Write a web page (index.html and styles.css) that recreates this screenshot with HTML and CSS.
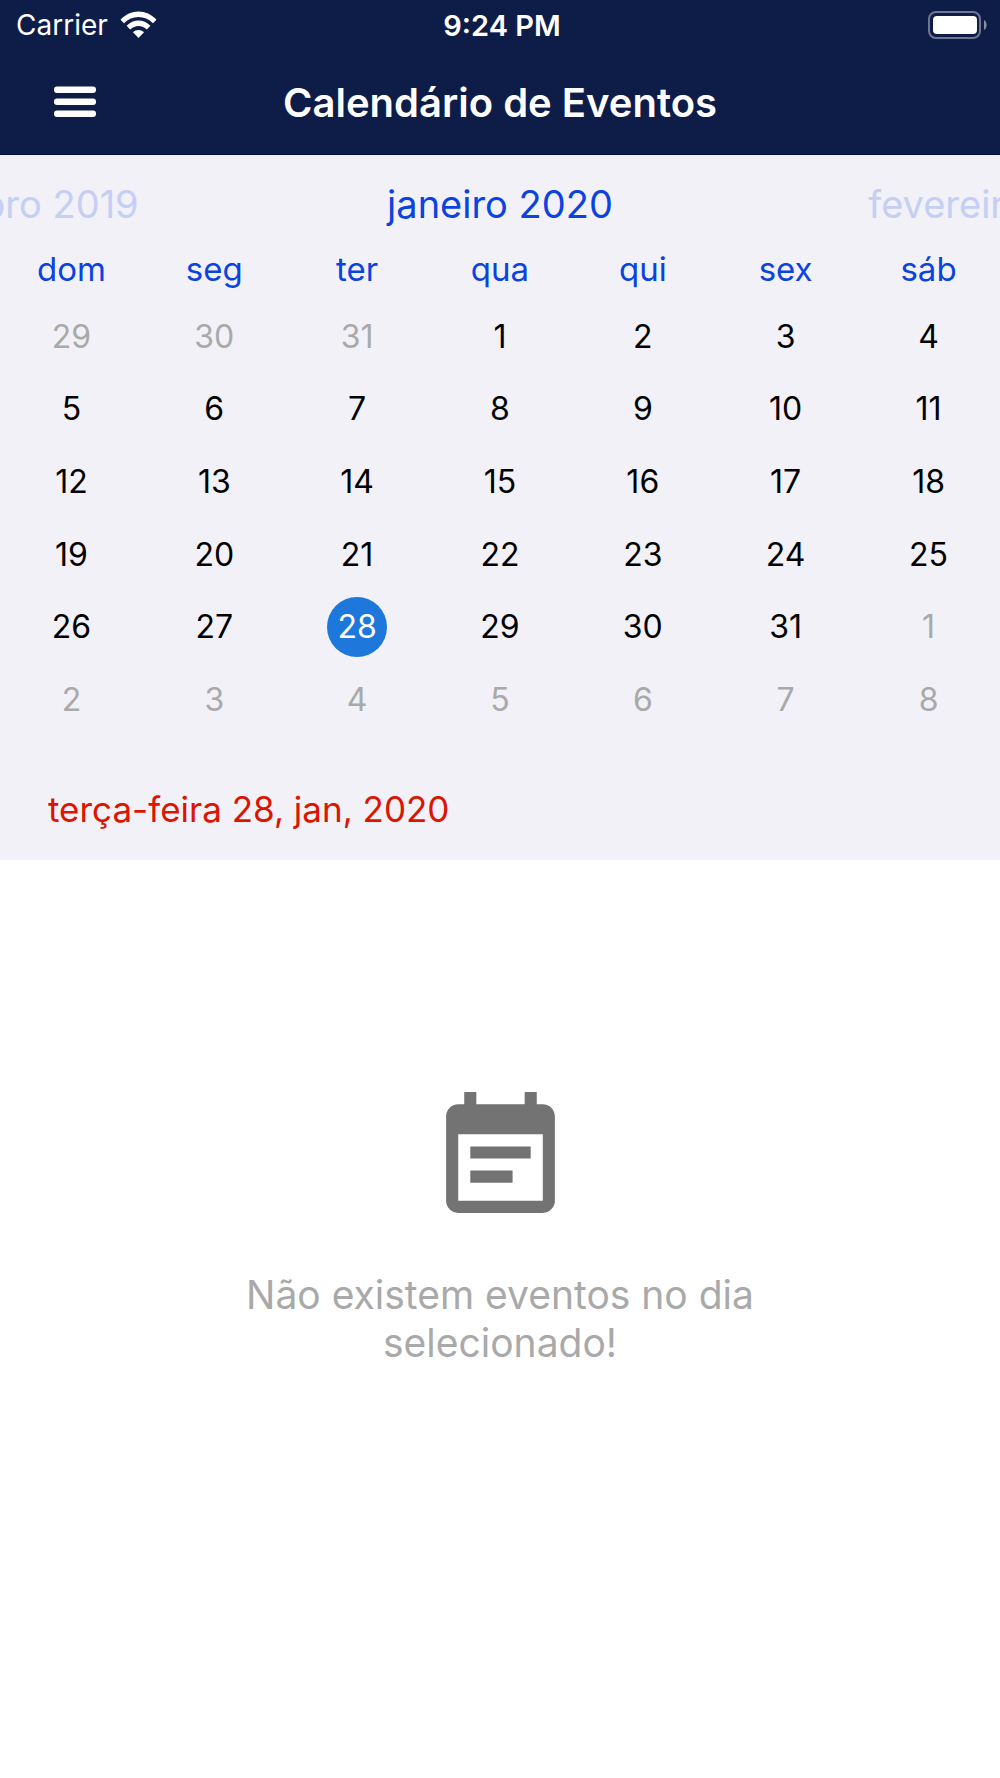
FILE: index.html
```html
<!DOCTYPE html>
<html lang="pt">
<head>
<meta charset="utf-8">
<meta name="viewport" content="width=device-width, initial-scale=1">
<title>Calendário de Eventos</title>
<link rel="stylesheet" href="styles.css">
</head>

<body>
<!--header-->
<header class="header">
<div class="status">
	<div class="carrier">
		Carrier
		<svg class="wifi" viewBox="0 0 37 28" aria-hidden="true">
			<path d="M0.5 8.8C10.5-2.2 26.5-2.2 36.5 8.8L33 12.3C25 3.9 12 3.9 4 12.3Z"/>
			<path d="M6.6 14.8C13.4 7.6 23.6 7.6 30.4 14.8L26.8 18.4C22.2 13.7 14.8 13.7 10.2 18.4Z"/>
			<path d="M13 21.3C16 18.2 21 18.2 24 21.3L18.5 27Z"/>
		</svg>
	</div>
	<div class="time">9:24 PM</div>
	<div class="battery">
		<svg class="battery-icon" viewBox="0 0 60 28" aria-hidden="true">
			<rect class="battery-case" x="1" y="1" width="51" height="26" rx="7"/>
			<rect x="5" y="5" width="44" height="18" rx="4"/>
			<path class="battery-tip" d="M56 9C59.500 10.500 59.500 17.500 56 19Z"/>
		</svg>
	</div>
</div>
<div class="nav">
	<button class="menu" type="button" aria-label="Menu">
		<svg class="menu-icon" viewBox="0 0 42 32" aria-hidden="true">
			<rect y="0.500" width="42" height="6.500" rx="3"/>
			<rect y="12.500" width="42" height="6.500" rx="3"/>
			<rect y="24.500" width="42" height="6.500" rx="3"/>
		</svg>
	</button>
	<h1 class="title">Calendário de Eventos</h1>
</div>
</header>

<!--calendar-->
<section class="calendar">
<div class="months">
	<button class="month" type="button">dezembro 2019</button>
	<button class="month current" type="button">janeiro 2020</button>
	<button class="month" type="button">fevereiro 2020</button>
</div>

<table class="days">
<thead>
<tr><th>dom</th><th>seg</th><th>ter</th><th>qua</th><th>qui</th><th>sex</th><th>sáb</th></tr>
</thead>
<tbody>
<tr>
	<td><button class="day other" type="button">29</button></td>
	<td><button class="day other" type="button">30</button></td>
	<td><button class="day other" type="button">31</button></td>
	<td><button class="day" type="button">1</button></td>
	<td><button class="day" type="button">2</button></td>
	<td><button class="day" type="button">3</button></td>
	<td><button class="day" type="button">4</button></td>
</tr>
<tr>
	<td><button class="day" type="button">5</button></td>
	<td><button class="day" type="button">6</button></td>
	<td><button class="day" type="button">7</button></td>
	<td><button class="day" type="button">8</button></td>
	<td><button class="day" type="button">9</button></td>
	<td><button class="day" type="button">10</button></td>
	<td><button class="day" type="button">11</button></td>
</tr>
<tr>
	<td><button class="day" type="button">12</button></td>
	<td><button class="day" type="button">13</button></td>
	<td><button class="day" type="button">14</button></td>
	<td><button class="day" type="button">15</button></td>
	<td><button class="day" type="button">16</button></td>
	<td><button class="day" type="button">17</button></td>
	<td><button class="day" type="button">18</button></td>
</tr>
<tr>
	<td><button class="day" type="button">19</button></td>
	<td><button class="day" type="button">20</button></td>
	<td><button class="day" type="button">21</button></td>
	<td><button class="day" type="button">22</button></td>
	<td><button class="day" type="button">23</button></td>
	<td><button class="day" type="button">24</button></td>
	<td><button class="day" type="button">25</button></td>
</tr>
<tr>
	<td><button class="day" type="button">26</button></td>
	<td><button class="day" type="button">27</button></td>
	<td><button class="day selected" type="button">28</button></td>
	<td><button class="day" type="button">29</button></td>
	<td><button class="day" type="button">30</button></td>
	<td><button class="day" type="button">31</button></td>
	<td><button class="day other" type="button">1</button></td>
</tr>
<tr>
	<td><button class="day other" type="button">2</button></td>
	<td><button class="day other" type="button">3</button></td>
	<td><button class="day other" type="button">4</button></td>
	<td><button class="day other" type="button">5</button></td>
	<td><button class="day other" type="button">6</button></td>
	<td><button class="day other" type="button">7</button></td>
	<td><button class="day other" type="button">8</button></td>
</tr>
</tbody>
</table>

<h2 class="date">terça-feira 28, jan, 2020</h2>
</section>

<!--no events-->
<main class="empty">
	<svg class="empty-icon" viewBox="0 0 24 24" aria-hidden="true">
		<path d="M19 3h-1V1h-2v2H8V1H6v2H5c-1.100 0-2 .9-2 2v14c0 1.100.9 2 2 2h14c1.100 0 2-.9 2-2V5c0-1.100-.9-2-2-2zm0 16H5V8h14v11z"/>
		<path d="M7 10h10v2H7zM7 14h7v2H7z"/>
	</svg>
	<p class="empty-text">Não existem eventos no dia selecionado!</p>
</main>
</body>
</html>
```

FILE: styles.css
```css
* {
	box-sizing: border-box;
}
body {
	margin: 0;
	background-color: #ffffff;
	color: #000000;
	font-family: Inter, "Liberation Sans", sans-serif;
}
button {
	padding: 0;
	border: 0;
	background: none;
	color: inherit;
	font: inherit;
}
svg {
	display: block;
	fill: currentColor;
}

.header {
	background-color: #0e1c48;
	border-bottom: 1px solid #05103c;
	color: #ffffff;
}
.status {
	display: grid;
	grid-template-columns: 1fr auto 1fr;
	align-items: center;
	height: 50px;
	padding: 0 12px 0 16px;
	font-size: 28px;
}
.carrier {
	display: flex;
	align-items: center;
	gap: 12px;
}
.wifi {
	width: 37px;
	height: 28px;
}
.time {
	font-size: 29px;
	font-weight: 600;
}
.battery {
	display: flex;
	justify-content: flex-end;
}
.battery-icon {
	width: 60px;
	height: 28px;
}
.battery-case {
	fill: none;
	stroke: #6e7792;
	stroke-width: 2px;
}
.battery-tip {
	fill: #868da3;
}

.nav {
	display: grid;
	grid-template-columns: 1fr auto 1fr;
	align-items: center;
	height: 104px;
	padding: 0 54px;
}
.menu {
	justify-self: start;
}
.menu-icon {
	width: 42px;
	height: 32px;
}
.title {
	margin: 0;
	font-size: 40px;
	font-weight: 600;
}

.calendar {
	background-color: #f2f1f7;
}
/* neighbour months are cut off at both sides */
.months {
	display: flex;
	justify-content: center;
	height: 83px;
	padding-top: 14px;
	overflow: hidden;
}
.month {
	flex: 0 0 50%;
	color: #c4cff3;
	font-size: 38px;
	white-space: nowrap;
}
.current {
	color: #0b43e0;
}

.days {
	width: 100%;
	height: 498px;
	border-collapse: collapse;
	table-layout: fixed;
}
.days th {
	height: 62px;
	padding: 0;
	color: #0b43e0;
	font-size: 33px;
	font-weight: 400;
}
.days td {
	padding: 0;
	text-align: center;
}
.day {
	display: block;
	width: 60px;
	height: 60px;
	margin: 0 auto;
	border-radius: 50%;
	font-size: 32px;
}
.other {
	color: #a9a9a9;
}
.selected {
	background-color: #1e77db;
	color: #ffffff;
}
.date {
	margin: 0;
	padding: 49px 48px 27px;
	color: #dc1400;
	font-size: 35px;
	font-weight: 400;
	line-height: 48px;
}

.empty {
	display: flex;
	flex-direction: column;
	align-items: center;
	gap: 40px;
	padding: 226px 20% 0;
}
.empty-icon {
	width: 145px;
	height: 145px;
	fill: #737373;
}
.empty-text {
	margin: 0;
	color: #a9a9a9;
	font-size: 39px;
	line-height: 48px;
	text-align: center;
}
```
